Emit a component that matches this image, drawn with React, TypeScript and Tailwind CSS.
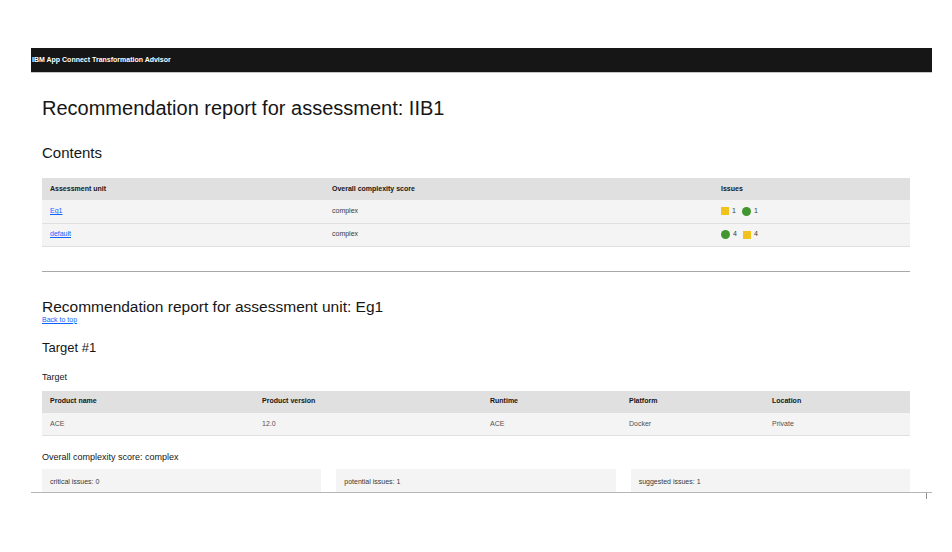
import React from 'react'

const units = [
  { name: 'Eg1', score: 'complex', issues: [{ kind: 'square', count: 1 }, { kind: 'circle', count: 1 }] },
  { name: 'default', score: 'complex', issues: [{ kind: 'circle', count: 4 }, { kind: 'square', count: 4 }] },
]

function IssueIcon({ kind }: { kind: string }) {
  if (kind === 'circle') return <span className="inline-block w-[9px] h-[9px] rounded-full bg-[#42962f]" />
  return <span className="inline-block w-[8px] h-[8px] bg-[#f1c21b]" />
}

export default function App() {
  return (
    <div className="w-[952px] h-[552px] bg-white pt-[48px] pl-[31px] text-[#161616]" style={{ fontFamily: '"Liberation Sans", Arial, sans-serif' }}>
      <div className="relative w-[901px] h-[445px] overflow-hidden border-b border-[#b5b5b5]">
        <header className="h-[25px] bg-[#161616] border-b border-[#c6c6c6] flex items-center">
          <span className="ml-[1px] text-[7px] font-bold text-white">IBM App Connect Transformation Advisor</span>
        </header>

        <main className="pl-[11px] pr-[22px]">
          <h1 className="mt-[23px] text-[20px] leading-[24px] font-light">Recommendation report for assessment: IIB1</h1>
          <h2 className="mt-[24px] text-[15px] leading-[18px]">Contents</h2>

          <table className="mt-[16px] w-full text-[7px] border-collapse">
            <thead>
              <tr className="bg-[#e0e0e0] h-[22px] text-left">
                <th className="pl-[8px] font-bold w-[290px]">Assessment unit</th>
                <th className="font-bold w-[389px]">Overall complexity score</th>
                <th className="font-bold">Issues</th>
              </tr>
            </thead>
            <tbody>
              {units.map((u) => (
                <tr key={u.name} className="bg-[#f4f4f4] h-[23px] border-b border-[#e0e0e0] text-[#393939]">
                  <td className="pl-[8px]">
                    <a href="#" className="text-[#0f62fe] underline">{u.name}</a>
                  </td>
                  <td>{u.score}</td>
                  <td>
                    <div className="flex items-center gap-[6px]">
                      {u.issues.map((i, idx) => (
                        <span key={idx} className="flex items-center gap-[3px]">
                          <IssueIcon kind={i.kind} />
                          <span>{i.count}</span>
                        </span>
                      ))}
                    </div>
                  </td>
                </tr>
              ))}
            </tbody>
          </table>

          <hr className="mt-[24px] border-0 border-t border-[#a8a8a8]" />

          <h2 className="mt-[25px] text-[15.5px] leading-[19px]">Recommendation report for assessment unit: Eg1</h2>
          <a href="#" className="block text-[7px] leading-[8px] text-[#0f62fe] underline">Back to top</a>

          <h3 className="mt-[16px] text-[13px] leading-[16px]">Target #1</h3>
          <h4 className="mt-[16px] text-[9px] leading-[11px]">Target</h4>

          <table className="mt-[8px] w-full text-[7px] border-collapse">
            <thead>
              <tr className="bg-[#e0e0e0] h-[22px] text-left">
                <th className="pl-[8px] font-bold w-[220px]">Product name</th>
                <th className="font-bold w-[228px]">Product version</th>
                <th className="font-bold w-[139px]">Runtime</th>
                <th className="font-bold w-[143px]">Platform</th>
                <th className="font-bold">Location</th>
              </tr>
            </thead>
            <tbody>
              <tr className="bg-[#f4f4f4] h-[23px] border-b border-[#e0e0e0] text-[#525252]">
                <td className="pl-[8px]">ACE</td>
                <td>12.0</td>
                <td>ACE</td>
                <td>Docker</td>
                <td>Private</td>
              </tr>
            </tbody>
          </table>

          <p className="mt-[16px] text-[9px] leading-[11px]">Overall complexity score: complex</p>

          <div className="mt-[6px] grid grid-cols-3 gap-[15px]">
            {['critical issues: 0', 'potential issues: 1', 'suggested issues: 1'].map((t) => (
              <div key={t} className="bg-[#f4f4f4] h-[40px] pl-[8px] pt-[8px] text-[7px] text-[#393939]">{t}</div>
            ))}
          </div>
        </main>
      </div>
      <div className="ml-[895px] w-px h-[6px] bg-[#8d8d8d]" />
    </div>
  )
}
